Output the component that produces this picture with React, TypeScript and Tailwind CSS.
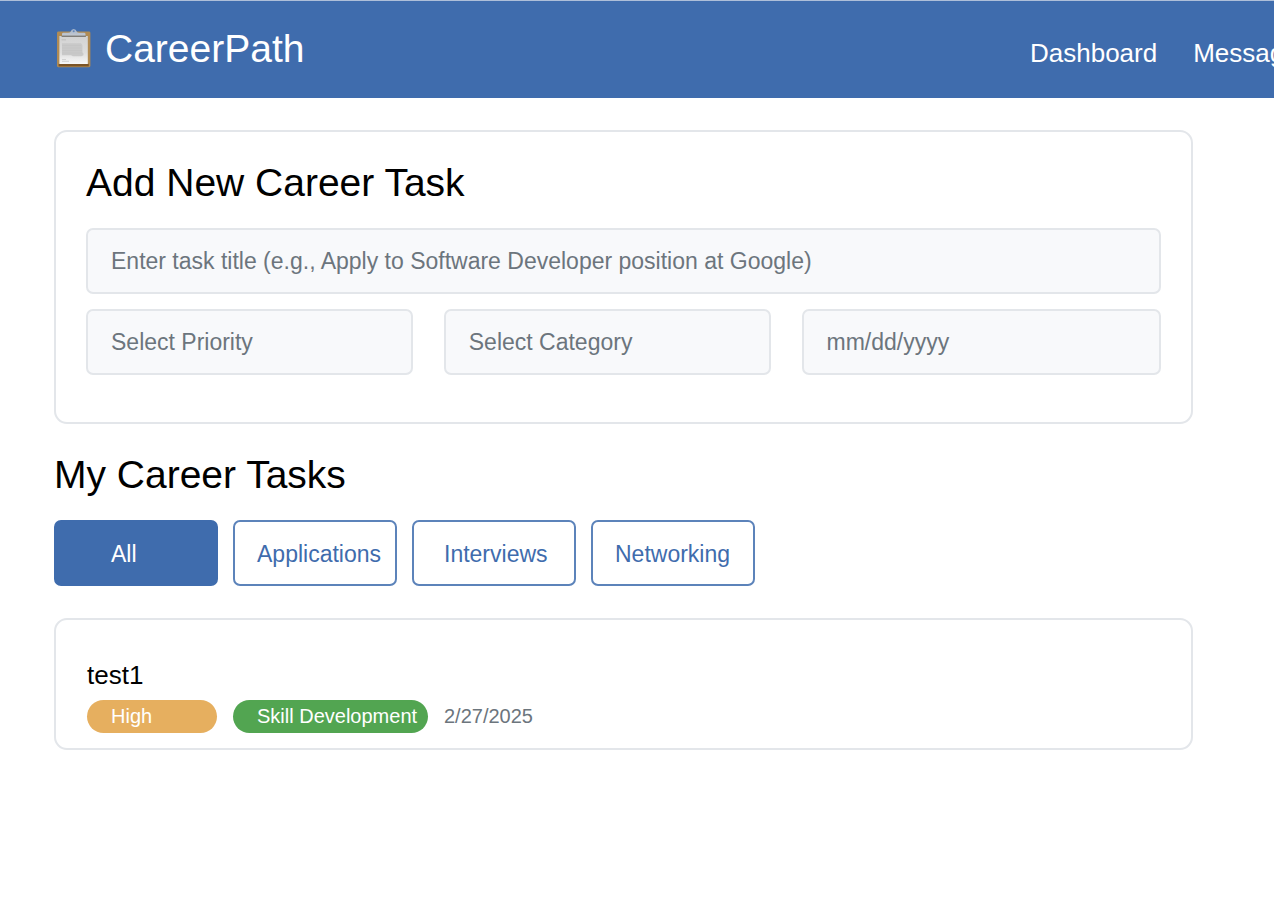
import React, { useState } from "react";

const fieldClass =
  "h-[66px] w-full min-w-0 appearance-none rounded-[7px] border-2 border-[#e3e6ea] bg-[#f8f9fb] px-[23px] text-[23px] leading-[26px] text-[#6c757d] placeholder:text-[#6c757d] placeholder:opacity-100 outline-none";

const filters = [
  { label: "All", inset: "pl-[55px]" },
  { label: "Applications", inset: "pl-[22px]" },
  { label: "Interviews", inset: "pl-[30px]" },
  { label: "Networking", inset: "pl-[22px]" },
];

function ClipboardIcon() {
  return (
    <svg width="36" height="40" viewBox="0 0 36 40" aria-hidden="true">
      <defs>
        <linearGradient id="paper" x1="0" y1="0" x2="0" y2="1">
          <stop offset="0" stopColor="#d2d2d2" />
          <stop offset="0.6" stopColor="#dedede" />
          <stop offset="1" stopColor="#f8f8f8" />
        </linearGradient>
        <linearGradient id="clip" x1="0" y1="0" x2="0" y2="1">
          <stop offset="0" stopColor="#a3b4cc" />
          <stop offset="1" stopColor="#c6cad0" />
        </linearGradient>
      </defs>
      <rect x="1" y="2.6" width="33.4" height="35.6" rx="1.4" fill="#b08b54" />
      <rect x="2.6" y="34.8" width="30.2" height="2.6" fill="#7b5426" />
      <rect x="3.4" y="7" width="28.4" height="28" fill="url(#paper)" />
      <rect x="5.5" y="10.4" width="4.5" height="0.9" fill="#bcbcbc" />
      <path d="M6 14.2h19l1.4 2v7l1 1v2l-2 1H17l-2-1H6z" fill="#c9c9c9" />
      <path d="M6 16.5h19M6 19h19M6 21.5h20M6 24h20" stroke="#c2c2c2" strokeWidth="0.6" />
      <path d="M6 30.5h4M6 32.3h7" stroke="#cacaca" strokeWidth="0.8" />
      <path
        d="M6 7V5Q6 3.8 7.5 3.8H12q2 0 2.6-1Q15.4 0 17.7 0t3.1 2.8q.6 1 2.6 1H28q1.5 0 1.5 1.2V7z"
        fill="url(#clip)"
      />
      <rect x="5.6" y="6.6" width="24.3" height="1.3" fill="#777570" />
      <circle cx="17.7" cy="2.3" r="1" fill="#6486b8" />
    </svg>
  );
}

export default function App() {
  const [active, setActive] = useState("All");

  return (
    <div className="min-h-screen overflow-x-hidden bg-white font-['Liberation_Sans',Arial,sans-serif] text-black">
      <header className="grid h-[98px] grid-cols-[minmax(0,1fr)_244px] overflow-hidden border-t border-[#aebfd9] bg-[#3f6cad] pl-[56px] text-white">
        <div className="flex items-center gap-[13px] pb-[2px]">
          <ClipboardIcon />
          <h1 className="text-[39px] leading-[44px]">CareerPath</h1>
        </div>
        <nav className="flex items-center gap-9 whitespace-nowrap pt-[6px] text-[26px] leading-[30px]">
          <a href="#dashboard">Dashboard</a>
          <a href="#messages">Messages</a>
        </nav>
      </header>

      <main className="pt-8 pr-[81px] pl-[54px]">
        <form className="rounded-[13px] border-2 border-[#e3e6ea] px-[30px] pt-[29px] pb-[47px]">
          <h2 className="text-[39px] leading-[44px]">Add New Career Task</h2>
          <input
            type="text"
            aria-label="Task title"
            placeholder="Enter task title (e.g., Apply to Software Developer position at Google)"
            className={`mt-[23px] ${fieldClass}`}
          />
          <div className="mt-[15px] grid grid-cols-[1fr_1fr_1.1fr] gap-[31px]">
            <select aria-label="Priority" className={fieldClass}>
              <option>Select Priority</option>
            </select>
            <select aria-label="Category" className={fieldClass}>
              <option>Select Category</option>
            </select>
            <input type="text" aria-label="Due date" placeholder="mm/dd/yyyy" className={fieldClass} />
          </div>
        </form>

        <h2 className="mt-[29px] text-[39px] leading-[44px]">My Career Tasks</h2>
        <div className="mt-[23px] flex gap-[15px]">
          {filters.map((f) => (
            <button
              key={f.label}
              type="button"
              aria-pressed={active === f.label}
              onClick={() => setActive(f.label)}
              className={`h-[66px] w-[164px] rounded-[7px] border-2 pt-[2px] text-left text-[23px] leading-[26px] ${f.inset} ${
                active === f.label
                  ? "border-[#3f6cad] bg-[#3f6cad] text-white"
                  : "border-[#5c83ba] bg-white text-[#3f6cad]"
              }`}
            >
              {f.label}
            </button>
          ))}
        </div>

        <article className="mt-8 rounded-[13px] border-2 border-[#e3e6ea] px-[31px] pt-10 pb-[15px]">
          <h3 className="text-[26px] leading-[30px]">test1</h3>
          <div className="mt-[10px] flex items-center gap-4 text-[20px] leading-[33px]">
            <span className="w-[130px] rounded-full bg-[#e6af5f] pl-6 text-white">High</span>
            <span className="w-[195px] rounded-full bg-[#52a551] pl-6 whitespace-nowrap text-white">
              Skill Development
            </span>
            <time dateTime="2025-02-27" className="text-[#6c757d]">
              2/27/2025
            </time>
          </div>
        </article>
      </main>
    </div>
  );
}
